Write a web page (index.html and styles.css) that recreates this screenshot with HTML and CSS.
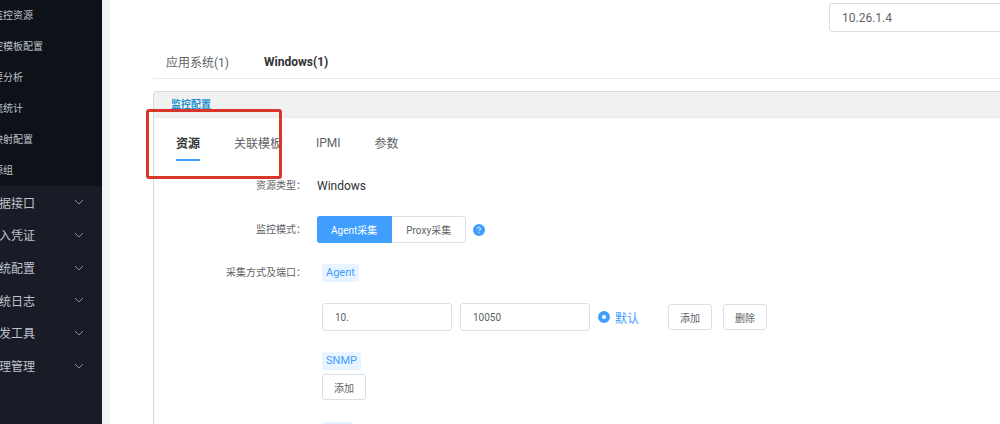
FILE: index.html
```html
<!DOCTYPE html>
<html lang="zh-CN">
<head>
  <meta charset="UTF-8">
  <title>监控配置</title>
  <link rel="stylesheet" href="styles.css">
</head>

<body>
  <div class="layout">
    <!-- 侧边菜单 -->
    <nav class="sidebar">
      <div class="submenu">
        <a href="#" class="submenu-item">监控资源</a>
        <a href="#" class="submenu-item">控模板配置</a>
        <a href="#" class="submenu-item">要分析</a>
        <a href="#" class="submenu-item">流统计</a>
        <a href="#" class="submenu-item">映射配置</a>
        <a href="#" class="submenu-item">源组</a>
      </div>
      <div class="menu">
        <button class="menu-item">据接口<svg class="arrow" viewBox="0 0 10 10"><path d="M1 3l4 4 4-4"/></svg></button>
        <button class="menu-item">入凭证<svg class="arrow" viewBox="0 0 10 10"><path d="M1 3l4 4 4-4"/></svg></button>
        <button class="menu-item">统配置<svg class="arrow" viewBox="0 0 10 10"><path d="M1 3l4 4 4-4"/></svg></button>
        <button class="menu-item">统日志<svg class="arrow" viewBox="0 0 10 10"><path d="M1 3l4 4 4-4"/></svg></button>
        <button class="menu-item">发工具<svg class="arrow" viewBox="0 0 10 10"><path d="M1 3l4 4 4-4"/></svg></button>
        <button class="menu-item">理管理<svg class="arrow" viewBox="0 0 10 10"><path d="M1 3l4 4 4-4"/></svg></button>
      </div>
    </nav>

    <main class="content">
      <div class="search-row">
        <input class="input search" type="text" value="10.26.1.4" aria-label="IP">
      </div>

      <div class="system-tabs">
        <button class="system-tab">应用系统(1)</button>
        <button class="system-tab active">Windows(1)</button>
      </div>

      <section class="panel">
        <h2 class="panel-title">监控配置</h2>

        <div class="tabs">
          <button class="tab active">资源</button>
          <button class="tab">关联模板</button>
          <button class="tab">IPMI</button>
          <button class="tab">参数</button>
          <span class="highlight"></span>
        </div>

        <form class="form">
          <div class="form-row">
            <span class="form-label">资源类型：</span>
            <span class="form-text">Windows</span>
          </div>

          <div class="form-row mode-row">
            <span class="form-label">监控模式：</span>
            <div class="mode-group">
              <button type="button" class="mode active">Agent采集</button>
              <button type="button" class="mode">Proxy采集</button>
            </div>
            <svg class="help" viewBox="0 0 12 12">
              <circle cx="6" cy="6" r="6" fill="#409eff"/>
              <path d="M4.5 4.8a1.5 1.5 0 1 1 2.3 1.2c-.5.3-.8.5-.8 1.1" fill="none" stroke="#fff"/>
              <circle cx="6" cy="8.8" r=".6" fill="#fff"/>
            </svg>
          </div>

          <div class="form-row port-row">
            <span class="form-label">采集方式及端口：</span>
            <div class="ports">
              <span class="tag">Agent</span>
              <div class="port-line">
                <input class="input" type="text" value="10." aria-label="地址">
                <input class="input" type="text" value="10050" aria-label="端口">
                <label class="default"><input type="radio" class="radio" name="default-port" checked>默认</label>
                <div class="actions">
                  <button type="button" class="btn">添加</button>
                  <button type="button" class="btn">删除</button>
                </div>
              </div>
              <span class="tag">SNMP</span>
              <button type="button" class="btn btn-add">添加</button>
              <span class="tag">JMX</span>
            </div>
          </div>
        </form>
      </section>
    </main>
  </div>
</body>
</html>
```

FILE: styles.css
```css
/* ===============================
   BASE
=============================== */
* {
  box-sizing: border-box;
}
html, body {
  margin: 0;
  height: 100%;
  overflow: hidden;
}
body {
  font-family: Roboto, "Noto Sans CJK SC", sans-serif;
  font-size: 12px;
  color: #606266;
  background: #fff;
}
button, input {
  margin: 0;
  font-family: inherit;
  color: inherit;
}
button {
  padding: 0;
  border: 0;
  background: none;
  cursor: pointer;
}
.layout {
  display: flex;
  height: 100%;
}

/* ===============================
   SIDEBAR
=============================== */
.sidebar {
  flex: 0 0 102px;
  overflow: hidden;
  background: #191c27;
  color: #bfc3cb;
}
.submenu {
  background: #0d1118;
}
.submenu-item {
  display: block;
  height: 31px;
  margin-left: -7px;
  font-size: 10px;
  line-height: 31px;
  color: inherit;
  text-decoration: none;
}
.menu {
  display: grid;
  grid-auto-rows: 1fr;
  height: 196px;
  margin-left: -1px;
}
.menu-item {
  display: flex;
  justify-content: space-between;
  align-items: center;
  padding-right: 18px;
  font-size: 12px;
}
.arrow {
  width: 10px;
  height: 10px;
  fill: none;
  stroke: #858993;
}

/* ===============================
   CONTENT
=============================== */
.content {
  flex: 1;
  min-width: 0;
  padding: 3px 0 0 43px;
  border-left: 8px solid #f0f4f5;
}
.input {
  width: 130px;
  height: 28px;
  padding: 0 12px;
  border: 1px solid #dcdfe6;
  border-radius: 3px;
  font-size: 10px;
  background: #fff;
}
.search-row {
  display: flex;
  justify-content: flex-end;
}
.search {
  width: 180px;
  height: 29px;
  margin-right: -9px;
  font-size: 12px;
}
.system-tabs {
  display: flex;
  gap: 35px;
  height: 47px;
  padding: 13px 13px 0;
  border-bottom: 1px solid #e8eaed;
}
.system-tab {
  font-size: 12px;
}
.system-tab.active {
  font-weight: bold;
  color: #303133;
}

/* ===============================
   PANEL
=============================== */
.panel {
  margin-top: 12px;
  border: 1px solid #d8d8d8;
  border-right: 0;
  border-radius: 4px 0 0 0;
}
.panel-title {
  height: 26px;
  margin: 0;
  padding-left: 17px;
  font-size: 10px;
  line-height: 26px;
  color: #1a8fd0;
  background: #f1f1f1;
  border-bottom: 1px solid #e8e8e8;
}
.tabs {
  position: relative;
  display: flex;
  gap: 34px;
  padding: 8px 22px 0;
}
.tab {
  height: 35px;
  border-bottom: 2px solid transparent;
  font-size: 12px;
}
.tab.active {
  font-weight: bold;
  color: #303133;
  border-color: #409eff;
}
/* 红色标注框 */
.highlight {
  position: absolute;
  top: -9px;
  left: -8px;
  width: 136px;
  height: 70px;
  border: 3px solid #d9362b;
  border-radius: 3px;
  pointer-events: none;
}

/* ===============================
   FORM
=============================== */
.form {
  padding-top: 16px;
}
.form-row {
  display: flex;
  align-items: center;
}
.form-label {
  width: 152px;
  margin-right: 11px;
  font-size: 10px;
  line-height: 18px;
  text-align: right;
}
.form-text {
  color: #303133;
}
.mode-row {
  margin-top: 21px;
}
.mode-group {
  display: flex;
}
.mode {
  height: 27px;
  padding: 0 14px;
  border: 1px solid #dcdfe6;
  border-left: 0;
  border-radius: 0 3px 3px 0;
  font-size: 10px;
}
.mode.active {
  color: #fff;
  background: #409eff;
  border-color: #409eff;
  border-radius: 3px 0 0 3px;
}
.help {
  width: 12px;
  height: 12px;
  margin-left: 7px;
}
.port-row {
  align-items: flex-start;
  margin-top: 21px;
}
.ports {
  display: flex;
  flex-direction: column;
  align-items: flex-start;
  padding-left: 5px;
}
.tag {
  height: 18px;
  padding: 0 4px;
  border-radius: 2px;
  font-size: 11px;
  line-height: 18px;
  color: #409eff;
  background: #e8f4ff;
}
.port-line {
  display: flex;
  align-items: center;
  gap: 8px;
  margin: 21px 0;
}
.default {
  display: flex;
  align-items: center;
  gap: 5px;
  color: #409eff;
}
.radio {
  appearance: none;
  width: 12px;
  height: 12px;
  margin: 0;
  border: 4px solid #409eff;
  border-radius: 50%;
  background: #fff;
}
.actions {
  display: flex;
  gap: 11px;
  margin-left: 21px;
}
.btn {
  height: 26px;
  padding: 0 11px;
  border: 1px solid #dcdfe6;
  border-radius: 3px;
  font-size: 10px;
  background: #fff;
}
.btn-add {
  margin: 4px 0 22px;
}
```
